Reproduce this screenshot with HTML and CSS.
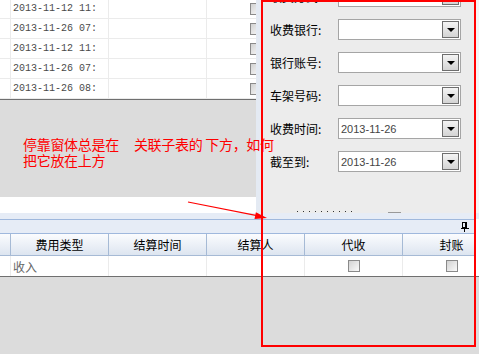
FILE: index.html
```html
<!DOCTYPE html>
<html lang="zh-CN">
<head>
    <meta charset="UTF-8">
    <title>停靠窗体</title>
    <link rel="stylesheet" href="styles.css">
</head>
<body>
    <div class="screen">
        <div class="upper">
            <div class="master">
                <div class="master-grid">
                    <div class="grid-row"><div class="cell"></div><div class="cell mono">2013-11-12 11:</div><div class="cell"></div><div class="cell check-cell"><span class="check"></span></div></div>
                    <div class="grid-row"><div class="cell"></div><div class="cell mono">2013-11-26 07:</div><div class="cell"></div><div class="cell check-cell"><span class="check"></span></div></div>
                    <div class="grid-row"><div class="cell"></div><div class="cell mono">2013-11-12 11:</div><div class="cell"></div><div class="cell check-cell"><span class="check"></span></div></div>
                    <div class="grid-row"><div class="cell"></div><div class="cell mono">2013-11-26 07:</div><div class="cell"></div><div class="cell check-cell"><span class="check"></span></div></div>
                    <div class="grid-row"><div class="cell"></div><div class="cell mono">2013-11-26 08:</div><div class="cell"></div><div class="cell check-cell"><span class="check"></span></div></div>
                </div>
                <div class="master-empty"></div>
                <div class="master-foot"></div>
            </div>
            <div class="side">
                <div class="side-edge"></div>
                <div class="side-body">
                    <div class="field-list">
                        <div class="field"><span class="field-label">收费方式:</span><div class="combo"><span class="combo-value"></span><span class="combo-btn"></span></div></div>
                        <div class="field"><span class="field-label">收费银行:</span><div class="combo"><span class="combo-value"></span><span class="combo-btn"></span></div></div>
                        <div class="field"><span class="field-label">银行账号:</span><div class="combo"><span class="combo-value"></span><span class="combo-btn"></span></div></div>
                        <div class="field"><span class="field-label">车架号码:</span><div class="combo"><span class="combo-value"></span><span class="combo-btn"></span></div></div>
                        <div class="field"><span class="field-label">收费时间:</span><div class="combo"><span class="combo-value">2013-11-26</span><span class="combo-btn"></span></div></div>
                        <div class="field"><span class="field-label">截至到:</span><div class="combo"><span class="combo-value">2013-11-26</span><span class="combo-btn"></span></div></div>
                    </div>
                    <div class="cut-row">
                        <span class="cut-dots"></span>
                        <span class="cut-bar"></span>
                    </div>
                </div>
            </div>
        </div>
        <div class="splitter"></div>
        <div class="dock">
            <div class="dock-caption">
                <svg class="pin" width="8" height="10" viewBox="0 0 8 10">
                    <rect x="1.5" y="0.5" width="4" height="5" fill="none" stroke="#000"/>
                    <rect x="4" y="0" width="2" height="6" fill="#000"/>
                    <rect x="0" y="6" width="8" height="1" fill="#000"/>
                    <rect x="3" y="7" width="1" height="3" fill="#000"/>
                </svg>
            </div>
            <div class="detail-grid">
                <div class="detail-head">
                    <div class="head-cell"></div>
                    <div class="head-cell">费用类型</div>
                    <div class="head-cell">结算时间</div>
                    <div class="head-cell">结算人</div>
                    <div class="head-cell">代收</div>
                    <div class="head-cell">封账</div>
                </div>
                <div class="detail-row">
                    <div class="cell"></div>
                    <div class="cell cjk">收入</div>
                    <div class="cell"></div>
                    <div class="cell"></div>
                    <div class="cell check-cell"><span class="check"></span></div>
                    <div class="cell check-cell"><span class="check"></span></div>
                </div>
            </div>
        </div>
        <div class="bottom-empty"></div>

        <!-- annotation drawn over the screenshot -->
        <div class="note-box"></div>
        <div class="note-text">
            <div>停靠窗体总是在<span class="gap"></span>关联子表的 下方，如何</div>
            <div>把它放在上方</div>
        </div>
        <svg class="note-arrow" width="479" height="354" viewBox="0 0 479 354">
            <line x1="188" y1="202" x2="257" y2="215.6" stroke="#f00" stroke-width="1.2"/>
            <polygon points="267,218 255.9,212.2 254.5,219" fill="#f00"/>
        </svg>
    </div>
</body>
</html>
```

FILE: styles.css
```css
body {
    margin: 0;
    padding: 0;
    background-color: #dcdcdc;
}

.screen {
    position: relative;
    width: 479px;
    height: 354px;
    overflow: hidden;
    background-color: #dcdcdc;
    font-family: "Noto Sans CJK SC", sans-serif;
    font-size: 12px;
}

.upper {
    display: flex;
    height: 213px;
}

.master {
    width: 256px;
    display: flex;
    flex-direction: column;
}

.master-grid {
    height: 99px;
    overflow: hidden;
    background-color: #fff;
    border-bottom: 1px solid #6f6f6f;
}

.master-grid .grid-row:first-child {
    margin-top: -1px;
}

.grid-row {
    display: grid;
    grid-template-columns: 11px 98px 98px 98px;
    height: 19px;
    border-bottom: 1px solid #ebebeb;
}

.cell {
    border-right: 1px solid #ebebeb;
    display: flex;
    align-items: center;
    padding-left: 2px;
    overflow: hidden;
    white-space: nowrap;
    color: #555;
}

.mono {
    font-family: "Liberation Mono", monospace;
    font-size: 10px;
    color: #4a4a4a;
}

.cjk {
    font-size: 12px;
    color: #666;
}

.check-cell {
    justify-content: center;
    padding-left: 0;
}

.check {
    display: block;
    width: 10px;
    height: 10px;
    border: 1px solid #8a8a8a;
    background: linear-gradient(135deg, #d2d2d2, #fafafa);
}

.master-empty {
    height: 97px;
    background-color: #dcdcdc;
}

.master-foot {
    flex: 1;
    background-color: #fff;
}

.side {
    flex: 1;
    display: flex;
}

.side-edge {
    width: 4px;
    background-color: #e4eaf3;
}

.side-body {
    flex: 1;
    background-color: #ececec;
    display: flex;
    flex-direction: column;
    overflow: hidden;
    border-right: 4px solid #f5f5f5;
}

.field-list {
    margin-top: -14px;
    display: flex;
    flex-direction: column;
    gap: 12px;
}

.field {
    display: flex;
    align-items: center;
    height: 21px;
    padding-left: 10px;
}

.field-label {
    width: 68px;
    color: #000;
    font-size: 12px;
}

.combo {
    width: 121px;
    height: 19px;
    border: 1px solid #a5a5a5;
    background-color: #fff;
    display: flex;
    align-items: center;
    justify-content: space-between;
}

.combo-value {
    padding-left: 2px;
    font-family: "Liberation Sans", sans-serif;
    font-size: 11px;
    color: #444;
}

.combo-btn {
    position: relative;
    width: 15px;
    height: 15px;
    margin-right: 1px;
    border: 1px solid #6e6e6e;
    background: linear-gradient(#f4f4f4, #d4d4d4);
}

.combo-btn::after {
    content: "";
    position: absolute;
    left: 4px;
    top: 6px;
    border-left: 4px solid transparent;
    border-right: 4px solid transparent;
    border-top: 4px solid #000;
}

.cut-row {
    margin-top: auto;
    height: 2px;
    display: flex;
    align-items: flex-start;
}

.cut-dots {
    margin-left: 37px;
    width: 58px;
    height: 1px;
    background: repeating-linear-gradient(90deg, #333 0 1px, transparent 1px 6px);
}

.cut-bar {
    margin-left: 33px;
    width: 13px;
    height: 1px;
    margin-top: 1px;
    background-color: #999;
}

.splitter {
    height: 6px;
    background-color: #e6ecf6;
}

.dock {
    background-color: #fff;
    border-bottom: 1px solid #6f6f6f;
}

.dock-caption {
    margin-left: -1px;
    width: 474px;
    height: 13px;
    border: 1px solid #9fb8dd;
    background-color: #e6ecf6;
    display: flex;
    align-items: center;
    justify-content: flex-end;
}

.pin {
    margin-right: 5px;
}

.detail-grid {
    width: 475px;
    overflow: hidden;
}

.detail-head {
    display: grid;
    grid-template-columns: 11px 98px 98px 98px 98px 98px;
    height: 21px;
    border-bottom: 1px solid #a6bad5;
    background: linear-gradient(#fbfcfe, #dde5f0);
}

.head-cell {
    border-right: 1px solid #a6bad5;
    display: flex;
    align-items: center;
    justify-content: center;
    color: #000;
    font-size: 12px;
}

.detail-row {
    display: grid;
    grid-template-columns: 11px 98px 98px 98px 98px 98px;
    height: 20px;
}

.bottom-empty {
    height: 77px;
    background-color: #dcdcdc;
}

.note-box {
    position: absolute;
    left: 261px;
    top: 0;
    width: 211px;
    height: 343px;
    border: 2px solid #f00;
}

.note-text {
    position: absolute;
    left: 23px;
    top: 136px;
    color: #f00;
    font-size: 14px;
    line-height: 16px;
    letter-spacing: -0.3px;
    white-space: nowrap;
}

.note-text .gap {
    display: inline-block;
    width: 15px;
}

.note-arrow {
    position: absolute;
    left: 0;
    top: 0;
}
```
